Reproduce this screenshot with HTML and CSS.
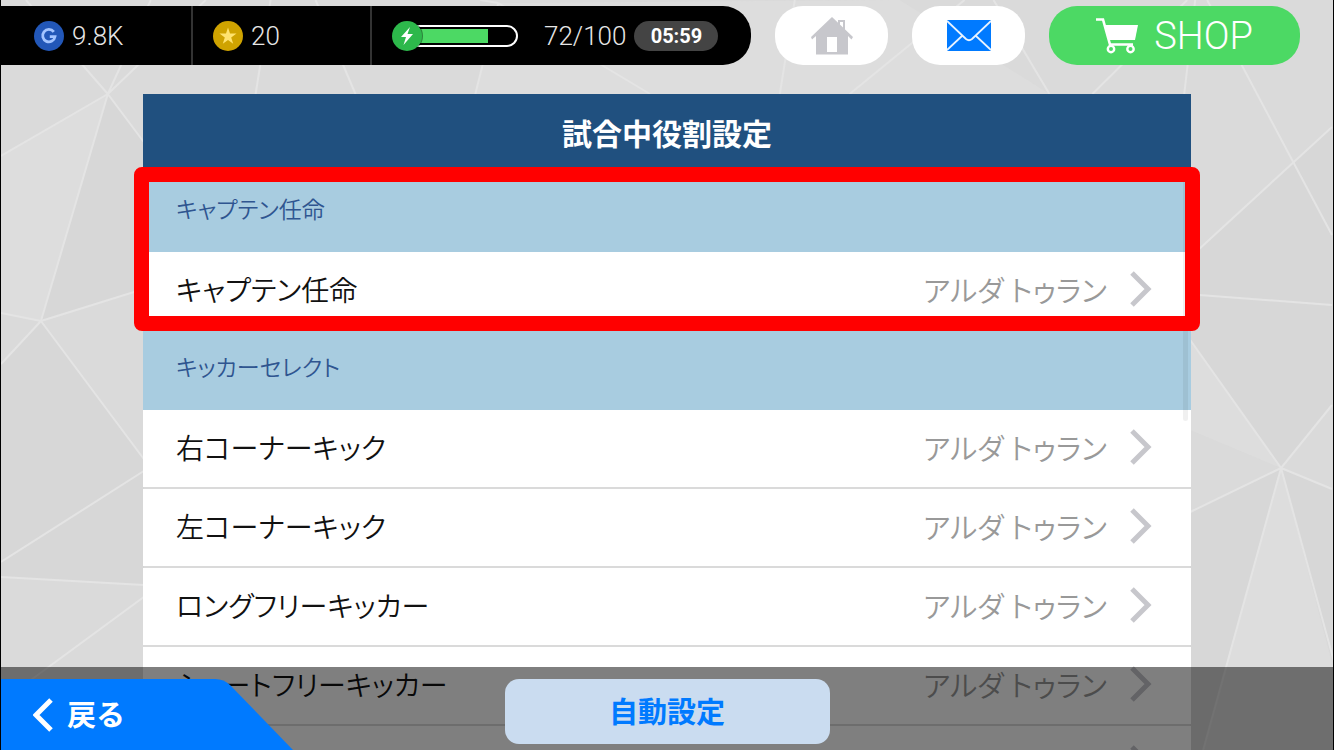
FILE: index.html
```html
<!doctype html>
<html lang="ja">
	<head>
		<meta charset="utf-8">
		<title>試合中役割設定</title>
		<link rel="stylesheet" href="styles.css">
	</head>

	<body>
		<svg class="backdrop" viewBox="0 0 1334 750" preserveAspectRatio="none" aria-hidden="true">
			<g fill="#d2d2d2" fill-opacity="0.4">
				<path d="M107 94L143 142V290L40 321z"/>
				<path d="M40 321L143 459V471L0 562V364z"/>
				<path d="M0 562L143 471V585L0 577z"/>
				<path d="M1191 340L1282 468L1333 405V305L1200 295z"/>
				<path d="M1282 468L1191 512V750H1204z"/>
				<path d="M1282 468L1333 489V665z"/>
				<path d="M1200 249L1333 127V305L1200 295z"/>
			</g>
			<g fill="#e0e0e0" fill-opacity="0.6">
				<path d="M107 94L0 156V313L40 321z"/>
				<path d="M498 3L900 0L1050 94H475z"/>
				<path d="M1282 468L1204 750H1334V665z"/>
				<path d="M1191 340L1282 468L1191 430z"/>
			</g>
			<g class="backdrop-lines">
				<path d="M107 94L25 0M107 94L205 0M107 94L150 0M107 94L0 156M107 94L143 142M107 94L40 321"/>
				<path d="M40 321L0 313M40 321L0 364M40 321L143 289M40 321L143 459"/>
				<path d="M0 562L143 471M0 577L143 585M0 702L143 597"/>
				<path d="M270 0L255 94M315 0L355 94M498 3L480 0M498 3L475 94M498 3L650 94"/>
				<path d="M795 0L780 94M965 0L850 94M994 0L1050 94M1188 0L1093 94M1196 0L1185 94M1208 0L1333 235"/>
				<path d="M1200 249L1333 127M1200 295L1333 305"/>
				<path d="M1282 468L1191 340M1282 468L1333 405M1282 468L1333 489M1282 468L1191 512M1282 468L1204 750M1282 468L1340 680"/>
			</g>
		</svg>

		<header class="topbar">
			<div class="status">
				<div class="stat stat-gp">
					<svg class="coin" viewBox="0 0 30 30">
						<circle cx="15" cy="15" r="15" fill="#2257b8"/>
						<path d="M19.800 10.900A6.200 6.200 0 1 0 21 15.600H15.800" fill="none" stroke="#a3c4ff" stroke-width="2.800"/>
					</svg>
					<span>9.8K</span>
				</div>
				<div class="stat stat-coin">
					<svg class="coin" viewBox="0 0 30 30">
						<circle cx="15" cy="15" r="15" fill="#cfa300"/>
						<path d="M15 6.500L17 12.600H23.500L18.200 16.400L20.200 22.800L15 18.900L9.800 22.800L11.800 16.400L6.500 12.600H13z" fill="#ffe36e"/>
					</svg>
					<span>20</span>
				</div>
				<div class="stat stat-energy">
					<svg class="energy" viewBox="0 0 126 30">
						<rect x="10" y="5" width="115" height="20" rx="10" fill="#000" stroke="#fff" stroke-width="2"/>
						<rect x="20" y="8" width="76" height="14" fill="#4cd964"/>
						<circle cx="15" cy="15" r="16" fill="#000" fill-opacity="0.4"/>
						<circle cx="15" cy="15" r="15" fill="#2db84b"/>
						<path d="M18 6L9 16H14L11.500 24L21 13H15.500z" fill="#fff"/>
					</svg>
					<span>72/100</span>
					<span class="timer">05:59</span>
				</div>
			</div>

			<button type="button" class="pill" aria-label="ホーム">
				<svg width="44" height="38" viewBox="0 0 44 38">
					<path d="M29 9V4H34V13" fill="none" stroke="#c7c7cc" stroke-width="2"/>
					<path d="M22 0L43 20L41.500 22.500L38 19V37.500H6V19L2 22.500L1 20z" fill="#c7c7cc"/>
					<rect x="17" y="20" width="10" height="15" fill="#fff"/>
				</svg>
			</button>
			<button type="button" class="pill" aria-label="メール">
				<svg width="44" height="31" viewBox="0 0 44 31">
					<rect width="44" height="31" rx="1" fill="#007aff"/>
					<path d="M0 1L19 19Q22 21.500 25 19L44 1M0 30L15.500 15.500M44 30L28.500 15.500" fill="none" stroke="#e8f3ff" stroke-width="1.800"/>
				</svg>
			</button>
			<button type="button" class="pill pill-shop">
				<svg width="42" height="36" viewBox="0 0 42 36">
					<path d="M0 1.500H7L14 26.500H37" fill="none" stroke="#fff" stroke-width="2.600"/>
					<path d="M8 7H42L39 22H12.500z" fill="#fff"/>
					<circle cx="15" cy="31" r="3.200" fill="none" stroke="#fff" stroke-width="2.400"/>
					<circle cx="34.500" cy="31" r="3.200" fill="none" stroke="#fff" stroke-width="2.400"/>
				</svg>
				<span>SHOP</span>
			</button>
		</header>

		<main class="panel">
			<h1 class="panel-title">試合中役割設定</h1>
			<div class="list">
				<section class="group group-marked">
					<h2 class="group-title">キャプテン任命</h2>
					<button type="button" class="row">
						<span class="role">キャプテン任命</span>
						<span class="player">アルダ トゥラン</span>
						<svg class="arrow" viewBox="0 0 22 36"><path d="M2 2L18 18L2 34"/></svg>
					</button>
				</section>
				<section class="group">
					<h2 class="group-title">キッカーセレクト</h2>
					<button type="button" class="row">
						<span class="role">右コーナーキック</span>
						<span class="player">アルダ トゥラン</span>
						<svg class="arrow" viewBox="0 0 22 36"><path d="M2 2L18 18L2 34"/></svg>
					</button>
					<button type="button" class="row">
						<span class="role">左コーナーキック</span>
						<span class="player">アルダ トゥラン</span>
						<svg class="arrow" viewBox="0 0 22 36"><path d="M2 2L18 18L2 34"/></svg>
					</button>
					<button type="button" class="row">
						<span class="role">ロングフリーキッカー</span>
						<span class="player">アルダ トゥラン</span>
						<svg class="arrow" viewBox="0 0 22 36"><path d="M2 2L18 18L2 34"/></svg>
					</button>
					<button type="button" class="row">
						<span class="role">ショートフリーキッカー</span>
						<span class="player">アルダ トゥラン</span>
						<svg class="arrow" viewBox="0 0 22 36"><path d="M2 2L18 18L2 34"/></svg>
					</button>
					<button type="button" class="row">
						<span class="role"></span>
						<svg class="arrow" viewBox="0 0 22 36"><path d="M2 2L18 18L2 34"/></svg>
					</button>
				</section>
				<div class="scroll-thumb"></div>
			</div>
		</main>

		<footer class="bottombar">
			<button type="button" class="back">
				<svg class="back-shape" viewBox="0 0 292 71" preserveAspectRatio="none" aria-hidden="true">
					<path d="M0 0H214Q223 0 229 6L292 71H0z" fill="#007aff"/>
				</svg>
				<svg class="back-arrow" viewBox="0 0 20 34"><path d="M18 2L3 17L18 32"/></svg>
				<span>戻る</span>
			</button>
			<button type="button" class="auto">自動設定</button>
		</footer>
	</body>
</html>
```

FILE: styles.css
```css
* {
	box-sizing: border-box;
}

body {
	position: relative;
	display: flex;
	flex-direction: column;
	height: 100vh;
	margin: 0;
	overflow: hidden;
	border: solid #000;
	border-width: 0 1px;
	background: #dadada;
	color: #111;
	font-family: "Noto Sans CJK JP", sans-serif;
}

button {
	margin: 0;
	padding: 0;
	border: 0;
	font-family: inherit;
	cursor: pointer;
}

svg {
	display: block;
	flex: none;
}

.backdrop {
	position: absolute;
	top: 0;
	left: 0;
	z-index: -1;
	width: 100%;
	height: 100%;
}

.backdrop-lines {
	fill: none;
	stroke: #e4e4e4;
	stroke-width: 2;
}

/* top bar */
.topbar {
	display: flex;
	flex: none;
	gap: 24px;
	padding: 6px 33px 0 0;
	font-family: Roboto, sans-serif;
}

.status {
	display: flex;
	flex: 1;
	height: 59px;
	border-radius: 0 28px 28px 0;
	background: #000;
	color: #e6e6e6;
	font-size: 26px;
	font-weight: 300;
}

.stat {
	display: flex;
	align-items: center;
	gap: 8px;
}

.stat + .stat {
	border-left: 2px solid #333;
}

.stat-gp {
	width: 190px;
	padding-left: 33px;
}

.stat-coin {
	width: 179px;
	padding-left: 20px;
}

.stat-energy {
	padding-left: 20px;
}

.coin {
	width: 30px;
	height: 30px;
}

.energy {
	width: 126px;
	height: 30px;
	margin-right: 18px;
}

.timer {
	width: 84px;
	border-radius: 15px;
	background: #444;
	color: #fff;
	font-size: 20px;
	font-weight: 700;
	line-height: 30px;
	text-align: center;
}

.pill {
	display: flex;
	align-items: center;
	justify-content: center;
	width: 113px;
	height: 59px;
	border-radius: 28px;
	background: #fff;
}

.pill-shop {
	gap: 16px;
	width: 251px;
	background: #4cd964;
	color: #fff;
	font-size: 38px;
	font-weight: 300;
}

/* role list */
.panel {
	flex: 1;
	min-height: 0;
	padding: 29px 142px 0;
	overflow: hidden;
}

.panel-title {
	height: 79px;
	margin: 0;
	background: #20507f;
	color: #fff;
	font-size: 30px;
	font-weight: 700;
	line-height: 76px;
	text-align: center;
}

.list {
	position: relative;
}

.group {
	display: flow-root;
}

.group-marked {
	position: relative;
}

.group-marked:after {
	content: "";
	position: absolute;
	top: -6px;
	right: -9px;
	bottom: 0;
	left: -9px;
	z-index: 2;
	border: 15px solid #f00;
	border-radius: 8px;
	pointer-events: none;
}

.group-title {
	height: 79px;
	margin: 0;
	padding: 0 33px;
	background: #a8cce0;
	color: #2f5590;
	font-size: 23px;
	font-weight: 350;
	font-feature-settings: "palt";
	line-height: 70px;
}

.row {
	display: flex;
	align-items: center;
	width: 100%;
	height: 77px;
	margin-bottom: 2px;
	padding: 0 39px 4px 33px;
	background: #fff;
	color: #111;
	font-size: 28px;
	font-weight: 350;
	font-feature-settings: "palt";
	text-align: left;
}

.role {
	flex: 1;
}

.player {
	margin-right: 23px;
	color: #999;
	font-size: 29px;
}

.arrow {
	width: 22px;
	height: 36px;
	fill: none;
	stroke: #c7c7cc;
	stroke-width: 5;
}

.scroll-thumb {
	position: absolute;
	top: 4px;
	right: 3px;
	z-index: 1;
	width: 5px;
	height: 244px;
	border-radius: 3px;
	background: rgba(0, 0, 0, 0.06);
}

/* bottom bar */
.bottombar {
	position: absolute;
	right: 0;
	bottom: 0;
	left: 0;
	z-index: 3;
	display: flex;
	justify-content: center;
	height: 83px;
	padding-top: 12px;
	background: rgba(0, 0, 0, 0.5);
}

.back {
	position: absolute;
	bottom: 0;
	left: 0;
	display: flex;
	align-items: center;
	gap: 14px;
	width: 292px;
	height: 71px;
	padding-left: 32px;
	background: none;
	color: #fff;
	font-size: 29px;
	font-weight: 700;
}

.back-shape {
	position: absolute;
	top: 0;
	left: 0;
	z-index: -1;
	width: 100%;
	height: 100%;
}

.back-arrow {
	width: 20px;
	height: 34px;
	fill: none;
	stroke: #fff;
	stroke-width: 5;
}

.back span,
.auto {
	padding-bottom: 4px;
}

.auto {
	width: 325px;
	height: 65px;
	border-radius: 14px;
	background: #cadcf0;
	color: #007aff;
	font-size: 29px;
	font-weight: 700;
}
```
